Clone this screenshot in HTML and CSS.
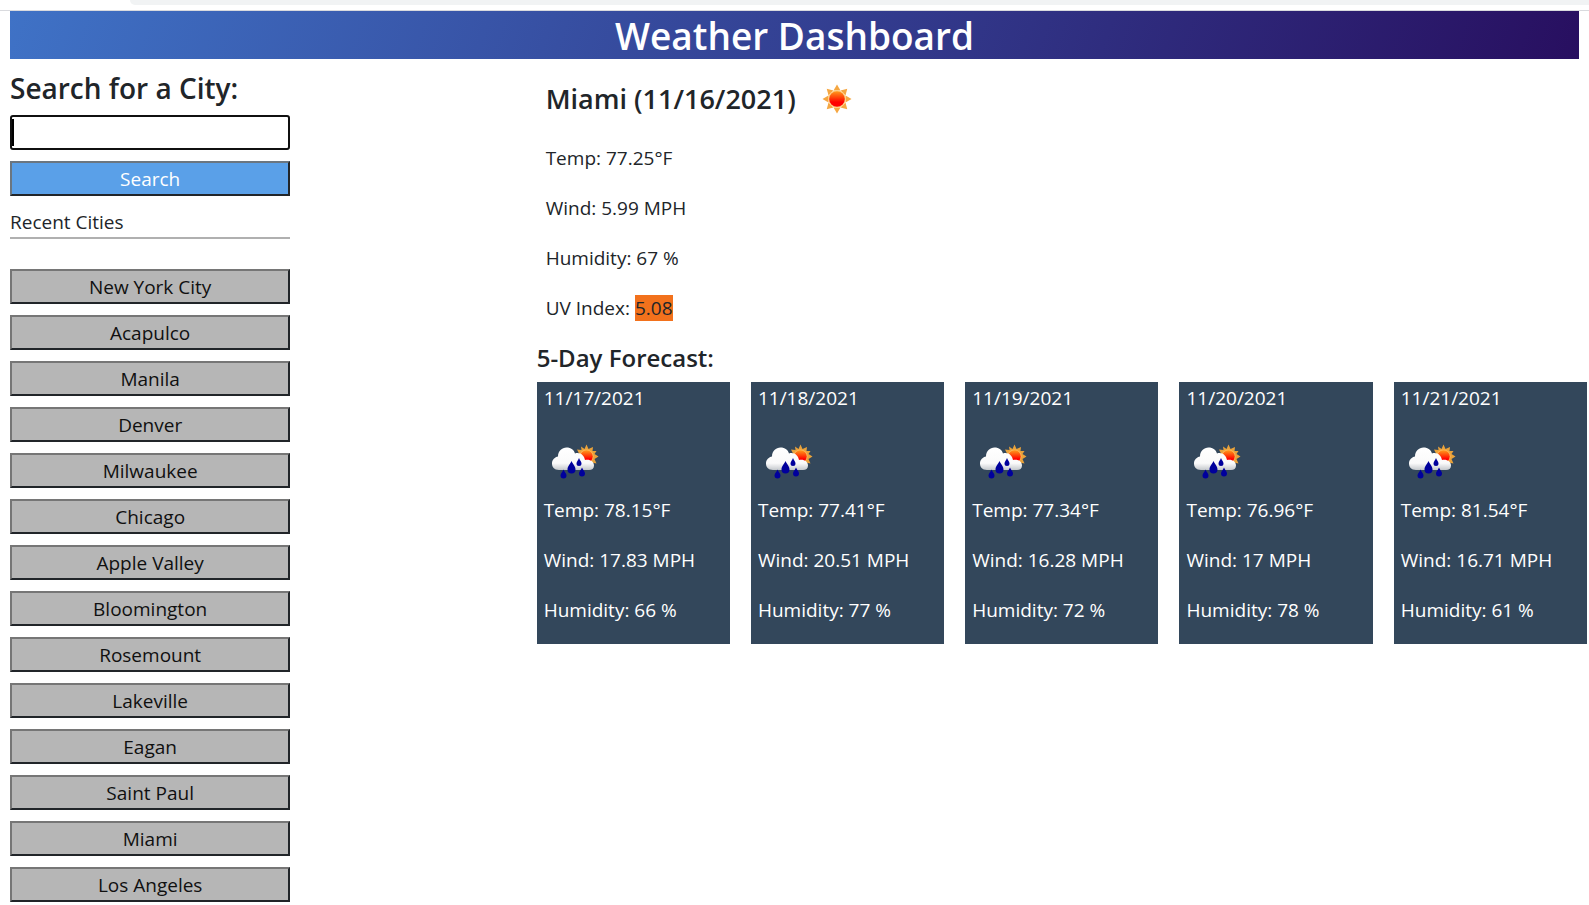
FILE: index.html
```
<!DOCTYPE html>
<html lang="en">
<head>
<meta charset="utf-8">
<title>Weather Dashboard</title>
<link rel="stylesheet" href="styles.css">
</head>
<body>
<svg class="symbols" aria-hidden="true">
  <defs>
    <linearGradient id="sun-fill" x1="0" y1="0" x2="0" y2="1">
      <stop offset="0" stop-color="#ff9a1c"/>
      <stop offset=".45" stop-color="#ff3a08"/>
      <stop offset=".7" stop-color="#ff0000"/>
    </linearGradient>
    <linearGradient id="cloud-fill" x1="0" y1="0" x2="0" y2="1">
      <stop offset="0" stop-color="#ffffff"/>
      <stop offset=".7" stop-color="#fafafa"/>
      <stop offset="1" stop-color="#c4c8cc"/>
    </linearGradient>
    <symbol id="sun" viewBox="-15 -15 30 30">
      <g fill="#f5a742">
        <path id="ray" d="M-3.500 -8.500L0 -14.500L3.500 -8.500Z"/>
        <use href="#ray" transform="rotate(45)"/>
        <use href="#ray" transform="rotate(90)"/>
        <use href="#ray" transform="rotate(135)"/>
        <use href="#ray" transform="rotate(180)"/>
        <use href="#ray" transform="rotate(225)"/>
        <use href="#ray" transform="rotate(270)"/>
        <use href="#ray" transform="rotate(315)"/>
      </g>
      <circle r="9" fill="#ffcf85"/>
      <circle r="7.800" fill="url(#sun-fill)"/>
    </symbol>
    <symbol id="rain" viewBox="0 0 48 36">
      <g transform="translate(35.500 12.500)">
        <path d="M0-12L2-7.500L6.500-9.500L6-5.500L10-5.500L8-2.500L12 0L8 2.500L10 7L5 6L0 9L-8 3L-7.500-3L-9.500-7L-5-6.500L-5.500-10L-2-7.500Z" fill="#e9a23b"/>
        <circle r="7" fill="#ffb75a"/>
        <circle r="6.200" fill="url(#sun-fill)"/>
      </g>
      <path d="M8 26C3 26 1 23 1 19.500C1 15.500 4 13 7 12.500C7 7 11 3.500 15.500 3.500C20 3.500 23 6 24 9.500C29 8 33 11 34 16C39 15 43 17.500 43 21.500C43 24.500 41 26 38 26Z" fill="url(#cloud-fill)"/>
      <g fill="#00009c">
        <path d="M20.500 17C22 20.500 24.500 22 24.500 25.500A4 4 0 0 1 16.500 25.500C16.500 22 19 20.500 20.500 17Z"/>
        <path d="M28 14C29 16.500 30.500 17.500 30.500 19.500A2.500 2.500 0 0 1 25.500 19.500C25.500 17.500 27 16.500 28 14Z"/>
        <path d="M12.500 25.500C13.500 28 15.500 29.500 15.500 31.500A3 3 0 0 1 9.500 31.500C9.500 29.500 11.500 28 12.500 25.500Z"/>
        <path d="M31 23.500C32 26 34 27.500 34 29.500A3 3 0 0 1 28 29.500C28 27.500 30 26 31 23.500Z"/>
      </g>
    </symbol>
  </defs>
</svg>

<div class="top-edge"></div>
<header class="banner"><h1 class="banner-title">Weather Dashboard</h1></header>

<div class="layout">
  <aside class="sidebar">
    <form class="panel">
      <label class="search-label" for="city">Search for a City:</label>
      <input class="search-input" id="city" type="text">
      <button class="button button-search" type="button">Search</button>
    </form>
    <h2 class="recent-title">Recent Cities</h2>
    <div class="panel recent-list">
      <button class="button" type="button">New York City</button>
      <button class="button" type="button">Acapulco</button>
      <button class="button" type="button">Manila</button>
      <button class="button" type="button">Denver</button>
      <button class="button" type="button">Milwaukee</button>
      <button class="button" type="button">Chicago</button>
      <button class="button" type="button">Apple Valley</button>
      <button class="button" type="button">Bloomington</button>
      <button class="button" type="button">Rosemount</button>
      <button class="button" type="button">Lakeville</button>
      <button class="button" type="button">Eagan</button>
      <button class="button" type="button">Saint Paul</button>
      <button class="button" type="button">Miami</button>
      <button class="button" type="button">Los Angeles</button>
    </div>
  </aside>

  <main class="weather">
    <section class="current">
      <h2 class="current-title">Miami (11/16/2021)<svg class="sun-icon" role="img" aria-label="Clear sky"><use href="#sun"/></svg></h2>
      <p class="stat">Temp: 77.25°F</p>
      <p class="stat">Wind: 5.99 MPH</p>
      <p class="stat">Humidity: 67 %</p>
      <p class="stat">UV Index: <span class="uv">5.08</span></p>
    </section>
    <h3 class="forecast-title">5-Day Forecast:</h3>
    <section class="forecast">
      <article class="card">
        <h4 class="card-date">11/17/2021</h4>
        <svg class="rain-icon" role="img" aria-label="Rain"><use href="#rain"/></svg>
        <p class="stat">Temp: 78.15°F</p>
        <p class="stat">Wind: 17.83 MPH</p>
        <p class="stat">Humidity: 66 %</p>
      </article>
      <article class="card">
        <h4 class="card-date">11/18/2021</h4>
        <svg class="rain-icon" role="img" aria-label="Rain"><use href="#rain"/></svg>
        <p class="stat">Temp: 77.41°F</p>
        <p class="stat">Wind: 20.51 MPH</p>
        <p class="stat">Humidity: 77 %</p>
      </article>
      <article class="card">
        <h4 class="card-date">11/19/2021</h4>
        <svg class="rain-icon" role="img" aria-label="Rain"><use href="#rain"/></svg>
        <p class="stat">Temp: 77.34°F</p>
        <p class="stat">Wind: 16.28 MPH</p>
        <p class="stat">Humidity: 72 %</p>
      </article>
      <article class="card">
        <h4 class="card-date">11/20/2021</h4>
        <svg class="rain-icon" role="img" aria-label="Rain"><use href="#rain"/></svg>
        <p class="stat">Temp: 76.96°F</p>
        <p class="stat">Wind: 17 MPH</p>
        <p class="stat">Humidity: 78 %</p>
      </article>
      <article class="card">
        <h4 class="card-date">11/21/2021</h4>
        <svg class="rain-icon" role="img" aria-label="Rain"><use href="#rain"/></svg>
        <p class="stat">Temp: 81.54°F</p>
        <p class="stat">Wind: 16.71 MPH</p>
        <p class="stat">Humidity: 61 %</p>
      </article>
    </section>
  </main>
</div>
</body>
</html>
```
FILE: styles.css
```
* {
  box-sizing: border-box;
}

body {
  margin: 0;
  background: #fff;
  color: #212529;
  font: 400 19px/30px "Segoe UI", "Open Sans", "Noto Sans", sans-serif;
}

h1, h2, h3, h4, p {
  margin: 0;
}

.symbols {
  position: absolute;
  width: 0;
  height: 0;
}

.top-edge {
  height: 11px;
  border-bottom: 1px solid #d9dade;
}

.top-edge::before {
  content: "";
  display: block;
  height: 5px;
  margin-left: 130px;
  background: #f1f3f4;
  border-bottom-left-radius: 8px;
}

.banner {
  margin: 0 10px;
  background: linear-gradient(110deg, #3f72c6, #280f60);
  color: #fff;
  text-align: center;
}

.banner-title {
  padding-top: 2px;
  font-size: 37px;
  line-height: 46px;
  font-weight: 600;
}

.layout {
  display: flex;
  align-items: flex-start;
}

.sidebar {
  width: 33.3333%;
  padding: 13px 10px;
}

.panel {
  display: flex;
  flex-direction: column;
  gap: 11px;
  width: 55%;
}

.search-label {
  font-size: 28px;
  line-height: 32px;
  font-weight: 600;
}

.search-input {
  width: 100%;
  height: 35px;
  padding: 0 4px;
  border: 2px solid #101010;
  border-radius: 3px;
  background: linear-gradient(#000, #000) 0 50% / 2px 27px no-repeat #fff;
  font: inherit;
}

.button {
  height: 35px;
  padding: 0;
  border: 2px solid;
  border-color: #767676 #212529 #212529 #767676;
  background: #b6b6b6;
  color: #101010;
  font: inherit;
  text-align: center;
}

.button-search {
  border-color: #6b7680 #212529 #212529 #6b7680;
  background: #5aa0e8;
  color: #fff;
}

.recent-title {
  width: 55%;
  margin-top: 12px;
  margin-bottom: 30px;
  border-bottom: 2px solid #b0b0b0;
  font-size: 19px;
  line-height: 29px;
  font-weight: 400;
}

.weather {
  flex: 1;
  min-width: 0;
  padding: 20px 2px 0 7px;
}

.current {
  display: flex;
  flex-direction: column;
  gap: 20px;
  padding-left: 9px;
}

.current-title {
  display: flex;
  align-items: center;
  gap: 26px;
  margin-bottom: 4px;
  font-size: 27px;
  line-height: 40px;
  font-weight: 600;
}

.sun-icon {
  width: 30px;
  height: 30px;
}

.uv {
  background: #f2711c;
}

.forecast-title {
  margin-top: 20px;
  margin-bottom: 9px;
  font-size: 24px;
  font-weight: 600;
}

.forecast {
  display: grid;
  grid-template-columns: repeat(5, 1fr);
  gap: 21px;
}

.card {
  display: flex;
  flex-direction: column;
  gap: 20px;
  padding: 1px 7px 19px;
  background: #33475b;
  color: #fff;
}

.card-date {
  font-size: 19px;
  font-weight: 400;
}

.rain-icon {
  width: 48px;
  height: 36px;
  margin: 11px 0 -5px 7px;
}
```
